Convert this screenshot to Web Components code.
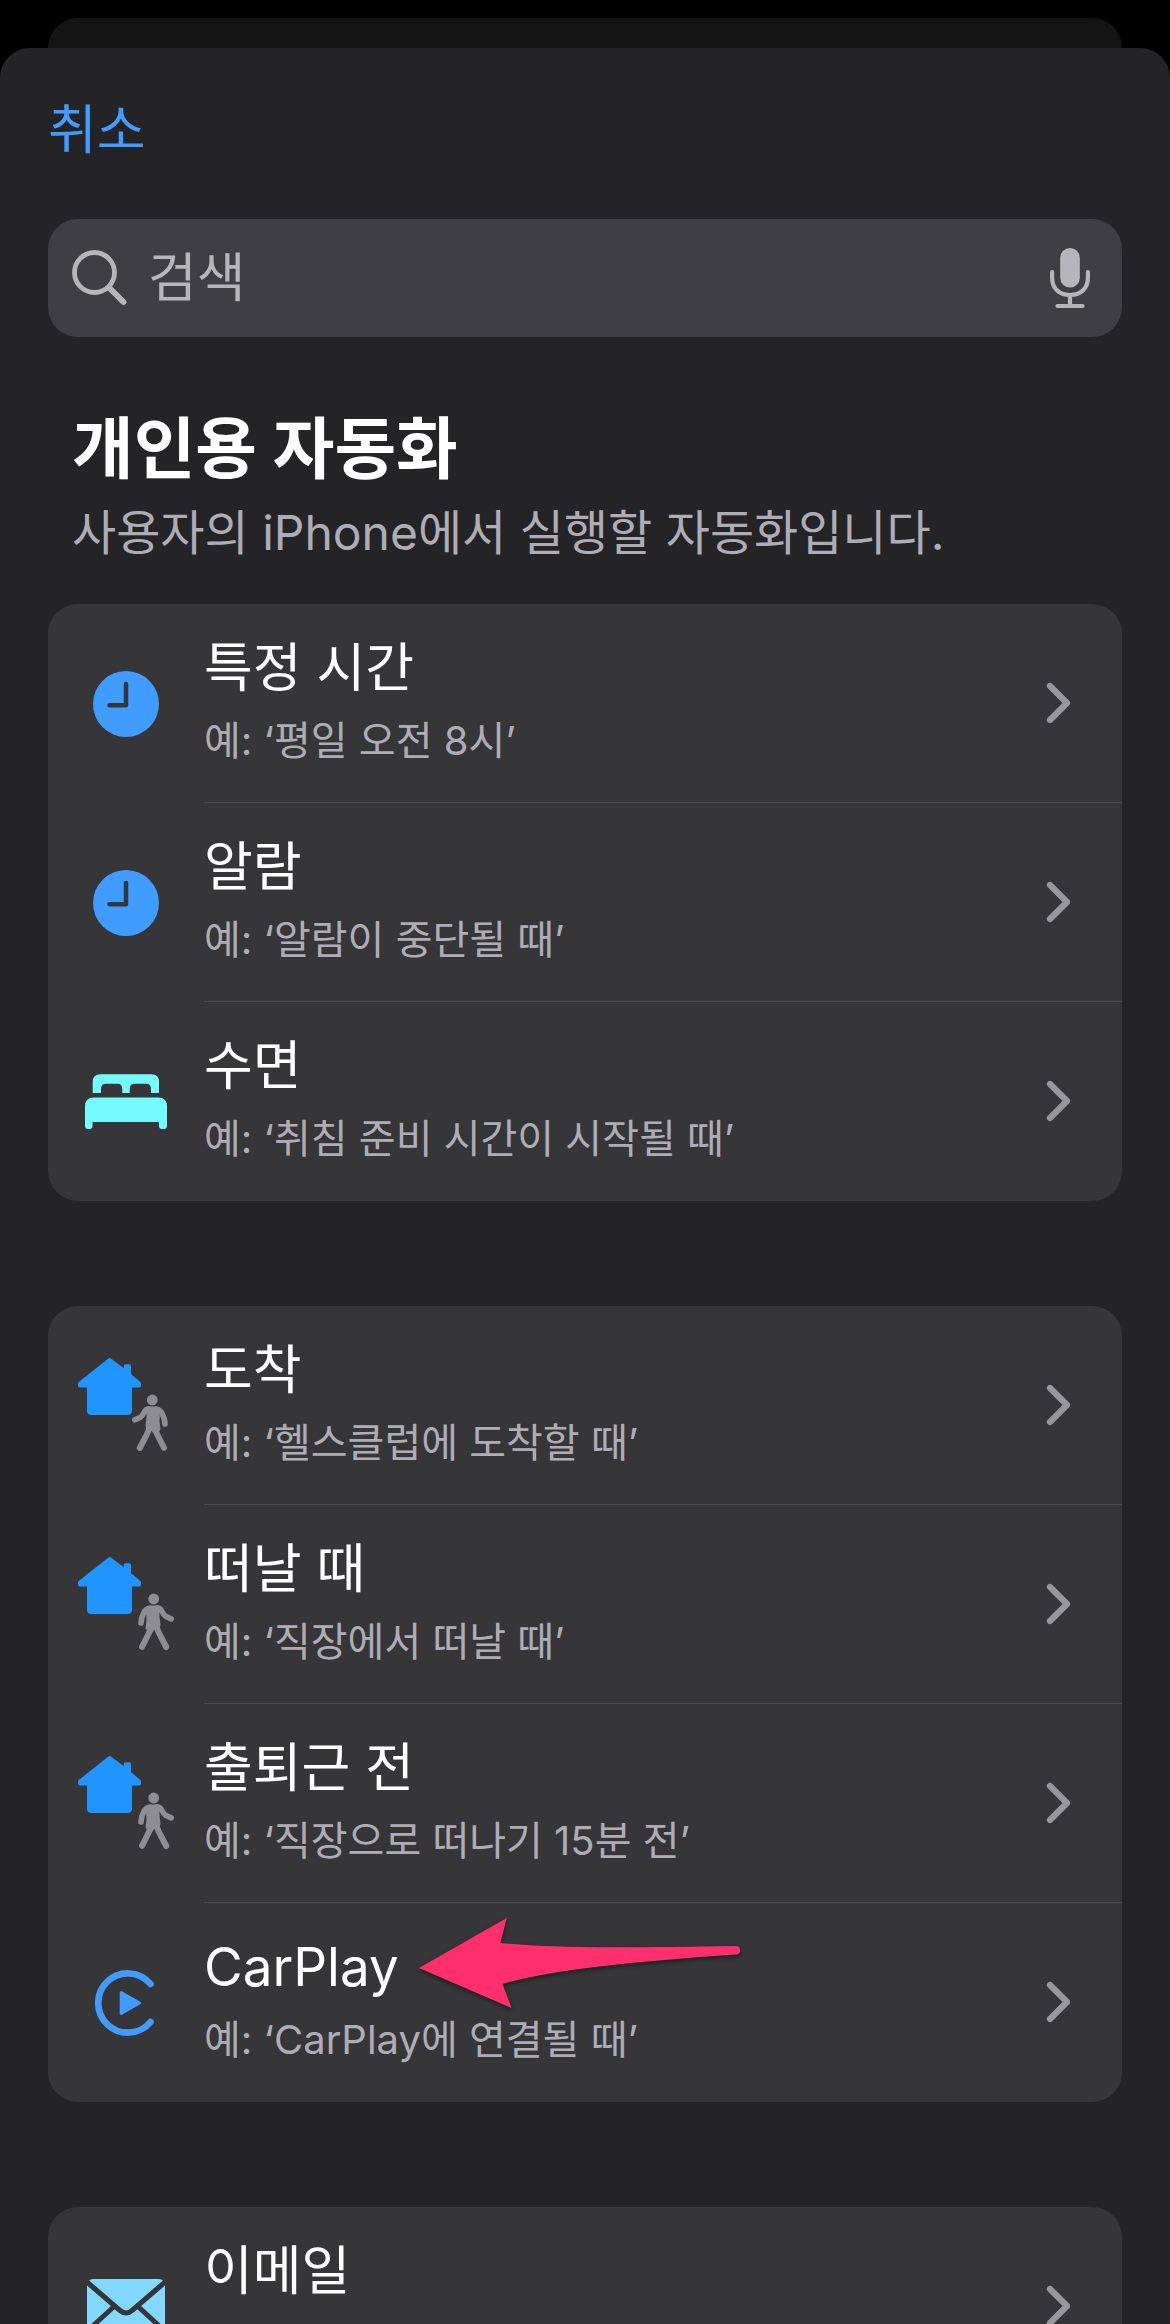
<!DOCTYPE html>
<html lang="ko">
<head>
<meta charset="utf-8">
<meta name="viewport" content="width=device-width, initial-scale=1">
<title>개인용 자동화</title>
<style>
  html { height: 100%; background: #000; }
  body {
    margin: 0;
    height: 100%;
    overflow: hidden;
    color: #fff;
    font-family: Inter, "Noto Sans CJK KR", sans-serif;
    --sheet: #242426;
    --card: #363638;
    --field: #3f3e43;
    --line: #4a4a4d;
    --blue: #409cff;
    --muted: #aeadb6;
    --gutter: 48px;
    --radius: 30px;
  }
</style>
</head>
<body>
<modal-sheet>
  <sheet-toolbar>취소</sheet-toolbar>
  <search-field placeholder="검색"></search-field>
  <section-header>
    <span slot="title">개인용 자동화</span>
    사용자의 iPhone에서 실행할 자동화입니다.
  </section-header>
  <trigger-group>
    <trigger-row icon="clock" heading="특정 시간">예: ‘평일 오전 8시’</trigger-row>
    <trigger-row icon="clock" heading="알람">예: ‘알람이 중단될 때’</trigger-row>
    <trigger-row icon="bed" heading="수면">예: ‘취침 준비 시간이 시작될 때’</trigger-row>
  </trigger-group>
  <trigger-group>
    <trigger-row icon="arrive" heading="도착">예: ‘헬스클럽에 도착할 때’</trigger-row>
    <trigger-row icon="leave" heading="떠날 때">예: ‘직장에서 떠날 때’</trigger-row>
    <trigger-row icon="leave" heading="출퇴근 전">예: ‘직장으로 떠나기 15분 전’</trigger-row>
    <trigger-row icon="carplay" heading="CarPlay">예: ‘CarPlay에 연결될 때’<pointer-arrow slot="overlay"></pointer-arrow></trigger-row>
  </trigger-group>
  <trigger-group>
    <trigger-row icon="mail" heading="이메일"></trigger-row>
  </trigger-group>
</modal-sheet>

<script>
const define = (name, render) => customElements.define(name, class extends HTMLElement {
  constructor() {
    super();
    this.attachShadow({ mode: 'open' });
  }
  connectedCallback() {
    this.shadowRoot.innerHTML = render(this);
  }
});

const house = `<path fill="#2094ff" stroke="#2094ff" stroke-width="4" stroke-linejoin="round"
  d="M61.7 54 77.7 66V60.3H81V69L91 77.5V79.5H82V105Q82 107 79 107H44Q41 107 41 105V79.5H32V77.5Z"/>`;
const walker = `<g fill="none" stroke="#8e8d93" stroke-linecap="round" stroke-linejoin="round">
  <circle cx="104.3" cy="94" r="5.4" fill="#8e8d93" stroke="none"/>
  <path fill="#8e8d93" stroke-width="4" d="M101 102.500H108L110 106 109.500 116 110.500 123 107 126 104 122 101.500 124 99.500 120 100.500 112V104Z"/>
  <path stroke-width="5.600" d="M101 102.800Q97.500 103 96 106.500 94.500 110 92 111.500L86.800 113.900"/>
  <path stroke-width="5.600" d="M108 103Q112.500 103.500 114.500 108.500 116.700 112 117 118"/>
  <path stroke-width="6" d="M102 120Q100 127 97.500 131L91.800 142"/>
  <path stroke-width="6" d="M107 121Q108 127 110.500 131L116 141.800"/>
</g>`;

const icons = {
  clock: `<circle cx="78" cy="100" r="33" fill="#409cff"/>
    <path d="M78 80V101.200H61.500" fill="none" stroke="#363638" stroke-width="4.500" stroke-linecap="round" stroke-linejoin="round"/>`,
  bed: `<g fill="#75fbfd">
    <path d="M44.700 91V80Q44.700 72.300 52.500 72.300H103.500Q111 72.300 111 80V91H103V87Q103 81.700 98 81.700H87Q81.700 81.700 81.700 87V91H74.300V87Q74.300 81.700 69.300 81.700H58Q53 81.700 53 87V91Z"/>
    <path d="M37 104.500Q37 95.500 46 95.500H110Q119 95.500 119 104.500V124Q119 127 116 127H114Q111 127 111 124V120H44.500V124Q44.500 127 41.500 127H40Q37 127 37 124Z"/></g>`,
  arrive: house + walker,
  leave: house + `<g transform="matrix(-1 0 0 1 210 0)">${walker}</g>`,
  carplay: `<path d="M102.500 81A29.600 29.600 0 1 0 102.500 119" fill="none" stroke="#409cff" stroke-width="6.600" stroke-linecap="round"/>
    <path d="M73.200 89.500 91.500 100 73.200 110.500Z" fill="#409cff" stroke="#409cff" stroke-width="3" stroke-linejoin="round"/>`,
  mail: `<rect x="39" y="72" width="78" height="57" rx="6" fill="#82d8ff"/>
    <g fill="none" stroke="#363638" stroke-width="5">
      <path d="M36 72.500 72 103.500Q78 108.500 84 103.500L120 72.500"/>
      <path d="M66 99.500 36 127M90 99.500 120 127"/></g>`
};

define('modal-sheet', () => `
  <style>
    :host { display: flex; flex-direction: column; height: 100%; padding-top: 18px; box-sizing: border-box; }
    .behind { flex: none; height: 30px; margin: 0 var(--gutter); background: #141414; border-radius: var(--radius) var(--radius) 0 0; }
    main {
      flex: 1; min-height: 0; overflow: auto; scrollbar-width: none; box-sizing: border-box;
      padding: 50px var(--gutter) 0; background: var(--sheet);
      border-radius: var(--radius) var(--radius) 0 0;
    }
  </style>
  <div class="behind"></div>
  <main><slot></slot></main>`);

define('sheet-toolbar', () => `
  <style>
    :host { display: flex; height: 64px; align-items: center; margin-bottom: 57px; }
    button { padding: 0; border: 0; background: none; color: var(--blue); font: inherit; font-size: 53px; line-height: 64px; }
  </style>
  <button type="button"><slot></slot></button>`);

define('search-field', el => `
  <style>
    :host { display: flex; align-items: center; height: 118px; padding: 0 28px 0 24px; box-sizing: border-box; border-radius: var(--radius); background: var(--field); }
    label { display: flex; }
    input {
      flex: 1; min-width: 0; margin: 0 24px 0 20px; padding: 0; border: 0; outline: 0;
      appearance: none; background: none; color: #fff; font: inherit; font-size: 53px; line-height: 64px; height: 64px;
    }
    input::placeholder { color: #b6b5be; opacity: 1; }
    button { display: flex; padding: 0; border: 0; background: none; }
  </style>
  <label for="q" aria-label="${el.getAttribute('placeholder')}">
    <svg width="56" height="56" viewBox="0 0 56 56" fill="none" stroke="#b6b5be" stroke-linecap="round">
      <circle cx="22.500" cy="22.500" r="20" stroke-width="4.800"/><path d="M37.500 38 51.500 52" stroke-width="6"/>
    </svg>
  </label>
  <input id="q" type="search" placeholder="${el.getAttribute('placeholder')}">
  <button type="button" aria-label="음성 입력">
    <svg width="48" height="62" viewBox="0 0 48 62" fill="none" stroke="#b6b5be" stroke-width="4.200" stroke-linecap="round">
      <rect x="14.200" y="1" width="19.600" height="39.500" rx="9.800" fill="#b6b5be" stroke="none"/>
      <path d="M6.100 25V31C6.100 42 14 48 24 48S41.900 42 41.900 31V25M24 48V58.500M11.500 59H36.500"/>
    </svg>
  </button>`);

define('section-header', () => `
  <style>
    :host { display: block; padding: 0 24px; margin: 68px 0 35px; }
    h1 { margin: 0; font-size: 67px; line-height: 88px; font-weight: 700; }
    p { margin: 0; font-size: 48px; line-height: 72px; padding-top: 4px; color: var(--muted); }
  </style>
  <h1><slot name="title"></slot></h1>
  <p><slot></slot></p>`);

define('trigger-group', () => `
  <style>
    :host { display: block; border-radius: var(--radius); background: var(--card); margin-bottom: 105px; }
  </style>
  <div role="list"><slot></slot></div>`);

define('trigger-row', el => `
  <style>
    :host { display: block; position: relative; --rule: var(--line); }
    :host(:last-child) { --rule: transparent; }
    button {
      display: flex; width: 100%; min-height: 199px; padding: 0; border: 0;
      background: none; color: inherit; font: inherit; text-align: left;
    }
    .icon { flex: none; display: block; }
    .body { flex: 1; display: flex; align-items: center; min-width: 0; min-height: 199px; box-sizing: border-box; padding-right: 50px; border-bottom: 1px solid var(--rule); }
    .text { flex: 1; min-width: 0; align-self: flex-start; padding-top: 32px; }
    .heading { display: block; font-size: 53px; line-height: 64px; }
    .example { display: block; padding-top: 13px; font-size: 40px; line-height: 56px; color: var(--muted); }
  </style>
  <button type="button">
    <svg class="icon" width="156" height="198" viewBox="0 0 156 198" aria-hidden="true">${icons[el.getAttribute('icon')]}</svg>
    <span class="body">
      <span class="text">
        <span class="heading">${el.getAttribute('heading')}</span>
        <span class="example"><slot></slot></span>
      </span>
      <svg width="28" height="44" viewBox="0 0 28 44" fill="none" stroke="#98979e" stroke-width="6.200" stroke-linecap="round" stroke-linejoin="round" aria-hidden="true"><path d="M6 5 23 22 6 39"/></svg>
    </span>
  </button>
  <slot name="overlay"></slot>`);

define('pointer-arrow', () => `
  <style>
    :host { position: absolute; left: 360px; top: 5px; pointer-events: none; }
    svg { display: block; filter: drop-shadow(0 2px 2px rgba(0, 0, 0, .5)); }
  </style>
  <svg width="345" height="110" viewBox="0 0 345 110" aria-hidden="true">
    <path fill="#ff2f6e" d="M11 60 98.700 10 92.300 35C150 41 230 39.500 328 38A4 4 0 0 1 328 46.500C230 53 140 62 94.500 76L103.500 100Z"/>
  </svg>`);
</script>
</body>
</html>
